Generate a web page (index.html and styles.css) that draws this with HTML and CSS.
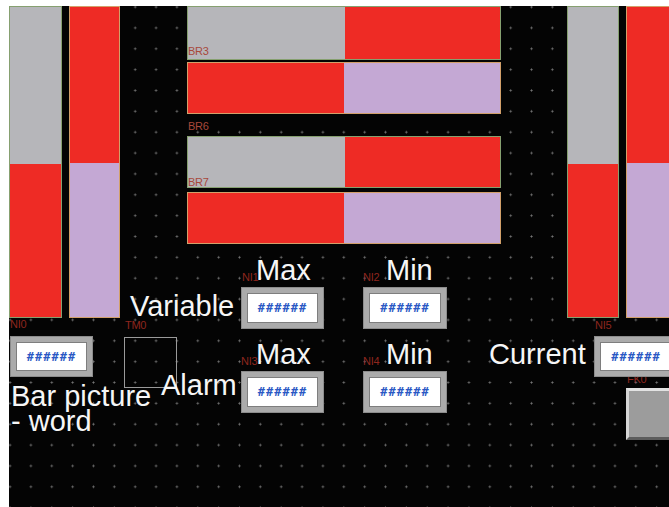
FILE: index.html
```html
<!DOCTYPE html>
<html lang="en">
<head>
    <meta charset="UTF-8">
    <title>Bar picture - word</title>
    <link rel="stylesheet" href="styles.css">
</head>
<body>
    <div class="screen">
        <!-- vertical bars -->
        <div class="vbar vb1 edge-green">
            <div class="fill gray" style="height: 157px"></div>
            <div class="fill red rest"></div>
        </div>
        <div class="vbar vb2 edge-tan">
            <div class="fill red" style="height: 156px"></div>
            <div class="fill lilac rest"></div>
        </div>
        <div class="vbar vb3 edge-green">
            <div class="fill gray" style="height: 157px"></div>
            <div class="fill red rest"></div>
        </div>
        <div class="vbar vb4 edge-tan">
            <div class="fill red" style="height: 156px"></div>
            <div class="fill lilac rest"></div>
        </div>

        <!-- horizontal bars -->
        <div class="hbar hb1 edge-green">
            <div class="fill gray" style="width: 157px"></div>
            <div class="fill red rest"></div>
        </div>
        <div class="hbar hb2 edge-tan">
            <div class="fill red" style="width: 156px"></div>
            <div class="fill lilac rest"></div>
        </div>
        <div class="hbar hb3 edge-green">
            <div class="fill gray" style="width: 157px"></div>
            <div class="fill red rest"></div>
        </div>
        <div class="hbar hb4 edge-tan">
            <div class="fill red" style="width: 156px"></div>
            <div class="fill lilac rest"></div>
        </div>

        <span class="tag bar-tag t-br3">BR3</span>
        <span class="tag bar-tag t-br6">BR6</span>
        <span class="tag bar-tag t-br7">BR7</span>
        <span class="tag t-ni0">NI0</span>
        <span class="tag t-tm0">TM0</span>
        <span class="tag t-ni1">NI1</span>
        <span class="tag t-ni2">NI2</span>
        <span class="tag t-ni3">NI3</span>
        <span class="tag t-ni4">NI4</span>
        <span class="tag t-ni5">NI5</span>
        <span class="tag t-fk0">FK0</span>

        <!-- numeric displays -->
        <div class="numbox n0"><div class="digits">######</div></div>
        <div class="numbox n1"><div class="digits">######</div></div>
        <div class="numbox n2"><div class="digits">######</div></div>
        <div class="numbox n3"><div class="digits">######</div></div>
        <div class="numbox n4"><div class="digits">######</div></div>
        <div class="numbox n5"><div class="digits">######</div></div>

        <div class="timer"></div>
        <div class="fkey"></div>

        <span class="caption c-max1">Max</span>
        <span class="caption c-min1">Min</span>
        <span class="caption c-variable">Variable</span>
        <span class="caption c-max2">Max</span>
        <span class="caption c-min2">Min</span>
        <span class="caption c-alarm">Alarm</span>
        <span class="caption c-current">Current</span>
        <span class="caption c-title">Bar picture<br>- word</span>
    </div>
</body>
</html>
```

FILE: styles.css
```css
body {
    margin: 0;
    padding: 0;
    background-color: #FFFFFF;
    font-family: 'Liberation Sans', Arial, Helvetica, sans-serif;
}
.screen {
    position: relative;
    margin: 6px 0 0 9px;
    width: 660px;
    height: 501px;
    overflow: hidden;
    background-color: #040404;
    background-image: radial-gradient(circle, #757575 0, #757575 0.8px, transparent 1.3px);
    background-size: 20.86px 20.86px;
    background-position: -9.4px -9.4px;
}

/* bars */
.vbar, .hbar {
    position: absolute;
    display: flex;
    box-sizing: border-box;
}
.vbar {
    top: 0;
    height: 312px;
    flex-direction: column;
}
.hbar {
    left: 178px;
    width: 314px;
}
.fill {
    flex: none;
}
.fill.rest {
    flex: 1;
}
.gray { background-color: #b6b6ba; }
.red { background-color: #ee2b25; }
.lilac { background-color: #c4a8d4; }
.edge-green { border: 1px solid #86a070; }
.edge-tan { border: 1px solid #d2a06a; }

.vb1 { left: 0; width: 53px; }
.vb2 { left: 60px; width: 51px; }
.vb3 { left: 558px; width: 52px; }
.vb4 { left: 617px; width: 52px; }

.hb1 { top: 0; height: 54px; }
.hb2 { top: 56px; height: 52px; }
.hb3 { top: 130px; height: 52px; }
.hb4 { top: 186px; height: 52px; }

/* object names */
.tag {
    position: absolute;
    font-size: 11px;
    line-height: 11px;
    color: #8e261e;
    letter-spacing: -0.3px;
}
.bar-tag { color: #a8483a; }
.t-br3 { left: 179px; top: 40px; }
.t-br6 { left: 179px; top: 115px; }
.t-br7 { left: 179px; top: 171px; }
.t-ni0 { left: 1px; top: 313px; }
.t-tm0 { left: 116px; top: 314px; }
.t-ni1 { left: 233px; top: 266px; }
.t-ni2 { left: 354px; top: 266px; }
.t-ni3 { left: 232px; top: 350px; }
.t-ni4 { left: 354px; top: 350px; }
.t-ni5 { left: 586px; top: 314px; }
.t-fk0 { left: 618px; top: 368px; }

/* numeric input */
.numbox {
    position: absolute;
    width: 83px;
    height: 42px;
    box-sizing: border-box;
    padding: 5px;
    border: 1px solid #8c8c8c;
    background-color: #ababab;
}
.digits {
    display: flex;
    height: 100%;
    box-sizing: border-box;
    align-items: center;
    justify-content: center;
    background-color: #FFFFFF;
    border: 1px solid #7e7e7e;
    color: #2a58c4;
    font-family: 'DejaVu Sans Mono', monospace;
    font-size: 12px;
    font-weight: bold;
    letter-spacing: 1px;
}
.n0 { left: 1px; top: 330px; height: 41px; }
.n1 { left: 232px; top: 281px; }
.n2 { left: 354px; top: 281px; width: 84px; }
.n3 { left: 232px; top: 365px; }
.n4 { left: 354px; top: 365px; width: 84px; }
.n5 { left: 585px; top: 330px; width: 84px; height: 41px; }

.timer {
    position: absolute;
    left: 115px;
    top: 331px;
    width: 53px;
    height: 51px;
    box-sizing: border-box;
    border: 1px solid #9a9a9a;
}
.fkey {
    position: absolute;
    left: 617px;
    top: 382px;
    width: 60px;
    height: 52px;
    box-sizing: border-box;
    border: 3px solid;
    border-color: #e2e2e2 #6a6a6a #5c5c5c #d6d6d6;
    background-color: #9c9c9c;
}

/* texts */
.caption {
    position: absolute;
    font-size: 29px;
    line-height: 29px;
    color: #f6f6f6;
    white-space: nowrap;
}
.c-max1 { left: 247px; top: 250px; }
.c-min1 { left: 377px; top: 250px; }
.c-variable { left: 121px; top: 286px; }
.c-max2 { left: 247px; top: 334px; }
.c-min2 { left: 377px; top: 334px; }
.c-alarm { left: 152px; top: 365px; }
.c-current { left: 480px; top: 334px; }
.c-title { left: 2px; top: 378px; line-height: 25px; }
```
